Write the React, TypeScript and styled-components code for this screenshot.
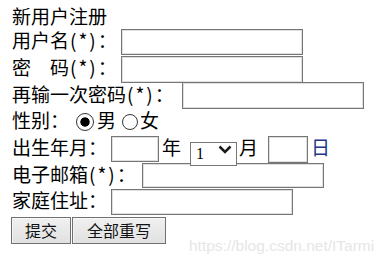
import styled, { createGlobalStyle } from "styled-components"

const GlobalStyle = createGlobalStyle`
  html, body {
    margin: 0;
    padding: 0;
    background: #fff;
  }
  body {
    font-family: "Noto Sans CJK SC", "Liberation Serif", serif;
    color: #000;
  }
`

const Page = styled.div`
  position: relative;
  width: 387px;
  height: 265px;
  padding-left: 12px;
  box-sizing: border-box;
  font-size: 19px;
  overflow: hidden;
`

const Title = styled.div`
  height: 29px;
  padding-top: 2px;
  box-sizing: border-box;
  line-height: 27px;
`

const Row = styled.div`
  display: flex;
  align-items: center;
  height: 26.7px;
`

const Label = styled.span<{ $w: number }>`
  flex-shrink: 0;
  width: ${(p) => p.$w}px;
  line-height: 19px;
  margin-bottom: 5px;
  white-space: nowrap;
`

// half-width "(*)" is wider in the original font
const Required = styled.span`
  letter-spacing: 2px;
  padding-left: 1px;
`

const Unit = styled.span<{ $ml?: number; $mr?: number; $color?: string }>`
  flex-shrink: 0;
  line-height: 19px;
  margin: 0 ${(p) => p.$mr || 0}px 5px ${(p) => p.$ml || 0}px;
  color: ${(p) => p.$color || "#000"};
`

const TextInput = styled.input<{ $w: number; $h?: number }>`
  width: ${(p) => p.$w}px;
  height: ${(p) => p.$h || 26}px;
  margin: 0;
  padding: 0 3px;
  box-sizing: border-box;
  border: 1px solid #767676;
  box-shadow: inset 0 0 0 1px #dedede;
  background: #fff;
  font: inherit;
  outline: none;
`

const Radio = styled.input<{ $size: number; $ml?: number }>`
  appearance: none;
  -webkit-appearance: none;
  flex-shrink: 0;
  width: ${(p) => p.$size}px;
  height: ${(p) => p.$size}px;
  margin: 0 0 0 ${(p) => p.$ml || 0}px;
  border: 1px solid #333;
  border-radius: 50%;
  background: #fff;
  box-sizing: border-box;

  &:checked {
    background: radial-gradient(circle, #000 0 4.3px, #fff 5px);
  }
`

const SelectBox = styled.div`
  position: relative;
  width: 47px;
  height: 24px;
  flex-shrink: 0;
`

const Select = styled.select`
  appearance: none;
  -webkit-appearance: none;
  width: 100%;
  height: 100%;
  margin: 0;
  padding: 0 0 0 5px;
  border: 1px solid #767676;
  border-radius: 0;
  background: #fff;
  font-family: "Liberation Serif", serif;
  font-size: 16px;
  color: #000;
  outline: none;
`

const Chevron = styled.svg`
  position: absolute;
  right: 5px;
  top: 8px;
  pointer-events: none;
`

const ButtonRow = styled.div`
  display: flex;
  align-items: center;
  gap: 1px;
  height: 27px;
  margin-top: 1px;
  margin-left: -1px;
`

const Button = styled.button<{ $w: number }>`
  width: ${(p) => p.$w}px;
  height: 27px;
  margin: 0;
  padding: 0 0 1px;
  border: 1px solid #707070;
  box-shadow: inset 0 1px 0 #fafafa, inset 1px 0 0 #f4f4f4;
  background: linear-gradient(#f0f0f0, #e1e1e1);
  font-family: "Noto Sans CJK SC", sans-serif;
  font-size: 16px;
  line-height: 24px;
  color: #111;
`

const Watermark = styled.div`
  position: absolute;
  left: 189px;
  top: 238px;
  font-family: "Liberation Sans", Arial, sans-serif;
  font-size: 15.5px;
  line-height: 16px;
  color: #e6e6e6;
  white-space: nowrap;
`

const months = Array.from({ length: 12 }, (_, i) => i + 1)

function App() {
    return (
        <Page>
            <GlobalStyle />
            <Title>新用户注册</Title>

            <Row>
                <Label $w={109}>用户名<Required>(*)</Required>：</Label>
                <TextInput $w={182} type="text" />
            </Row>

            <Row>
                <Label $w={109}>密　码<Required>(*)</Required>：</Label>
                <TextInput $w={182} $h={27} type="password" />
            </Row>

            <Row>
                <Label $w={170}>再输一次密码<Required>(*)</Required>：</Label>
                <TextInput $w={182} $h={27} type="password" />
            </Row>

            <Row>
                <Label $w={64}>性别：</Label>
                <Radio $size={18} type="radio" name="sex" defaultChecked />
                <Unit $ml={3}>男</Unit>
                <Radio $size={16} $ml={6} type="radio" name="sex" />
                <Unit $ml={2}>女</Unit>
            </Row>

            <Row>
                <Label $w={99}>出生年月：</Label>
                <TextInput $w={48} type="text" />
                <Unit $ml={3} $mr={9}>年</Unit>
                <SelectBox>
                    <Select defaultValue="1">
                        {months.map((m) => (
                            <option key={m} value={m}>{m}</option>
                        ))}
                    </Select>
                    <Chevron width="14" height="9" viewBox="0 0 14 9">
                        <polyline points="1.5,1.5 7,7 12.5,1.5" fill="none" stroke="#1a1a1a" strokeWidth="2.5" />
                    </Chevron>
                </SelectBox>
                <Unit $ml={2} $mr={10}>月</Unit>
                <TextInput $w={40} $h={27} type="text" />
                <Unit $ml={3} $color="#24348a">日</Unit>
            </Row>

            <Row>
                <Label $w={130}>电子邮箱<Required>(*)</Required>：</Label>
                <TextInput $w={182} $h={25} type="text" />
            </Row>

            <Row>
                <Label $w={99}>家庭住址：</Label>
                <TextInput $w={182} type="text" />
            </Row>

            <ButtonRow>
                <Button $w={60} type="submit">提交</Button>
                <Button $w={94} type="reset">全部重写</Button>
            </ButtonRow>

            <Watermark>https://blog.csdn.net/ITarmi</Watermark>
        </Page>
    )
}

export default App
